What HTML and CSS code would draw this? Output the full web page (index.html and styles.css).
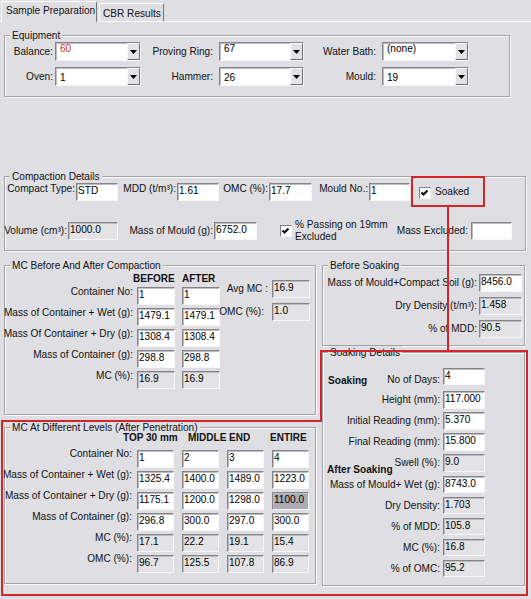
FILE: index.html
```html
<!DOCTYPE html>
<html>
<head>
<meta charset="utf-8">
<title>CBR Sample Preparation</title>
<link rel="stylesheet" href="styles.css">
</head>
<body>
<div class="tabs">
  <div class="tab active">Sample Preparation</div>
  <div class="tab inactive">CBR Results</div>
</div>
<div class="page">
  <fieldset class="grp equip">
    <legend>Equipment</legend>
    <div class="eqrow">
      <span class="lab eq1">Balance:</span>
      <div class="sel w86"><span class="v red">60</span><span class="btn"><svg width="7" height="4" viewBox="0 0 7 4"><path d="M0 0H7L3.5 4Z"/></svg></span></div>
      <span class="lab eq2">Proving Ring:</span>
      <div class="sel w85"><span class="v">67</span><span class="btn"><svg width="7" height="4" viewBox="0 0 7 4"><path d="M0 0H7L3.5 4Z"/></svg></span></div>
      <span class="lab eq2">Water Bath:</span>
      <div class="sel w87"><span class="v">(none)</span><span class="btn"><svg width="7" height="4" viewBox="0 0 7 4"><path d="M0 0H7L3.5 4Z"/></svg></span></div>
    </div>
    <div class="eqrow low">
      <span class="lab eq1">Oven:</span>
      <div class="sel w86"><span class="v">1</span><span class="btn"><svg width="7" height="4" viewBox="0 0 7 4"><path d="M0 0H7L3.5 4Z"/></svg></span></div>
      <span class="lab eq2">Hammer:</span>
      <div class="sel w85"><span class="v">26</span><span class="btn"><svg width="7" height="4" viewBox="0 0 7 4"><path d="M0 0H7L3.5 4Z"/></svg></span></div>
      <span class="lab eq2">Mould:</span>
      <div class="sel w87"><span class="v">19</span><span class="btn"><svg width="7" height="4" viewBox="0 0 7 4"><path d="M0 0H7L3.5 4Z"/></svg></span></div>
    </div>
  </fieldset>

  <fieldset class="grp comp">
    <legend>Compaction Details</legend>
    <div class="crow1">
      <span class="lab ca">Compact Type:</span><div class="in w42">STD</div>
      <span class="lab cb1">MDD (t/m³):</span><div class="in w42">1.61</div>
      <span class="lab cc">OMC (%):</span><div class="in w43">17.7</div>
      <span class="lab cd">Mould No.:</span><div class="in w41">1</div>
      <span class="chk soak"><svg width="10" height="10" viewBox="0 0 10 10"><polyline points="1.5,4.5 3.5,6.5 7.5,2.5"/></svg></span><span class="chkt">Soaked</span>
    </div>
    <div class="crow2">
      <span class="lab ce">Volume (cm³):</span><div class="in ro w50">1000.0</div>
      <span class="lab cf">Mass of Mould (g):</span><div class="in w43">6752.0</div>
      <span class="chk pass"><svg width="10" height="10" viewBox="0 0 10 10"><polyline points="1.5,4.5 3.5,6.5 7.5,2.5"/></svg></span><span class="twoline">% Passing on 19mm<br>Excluded</span>
      <span class="lab cg">Mass Excluded:</span><div class="in w41 mx"></div>
    </div>
  </fieldset>

  <div class="lower">
    <div class="colL">
      <fieldset class="grp mcb">
        <legend>MC Before And After Compaction</legend>
        <div class="mcb-body">
          <div class="mcb-main">
            <div class="hdr"><span class="sp128"></span><span class="h49">BEFORE</span><span>AFTER</span></div>
            <div class="rows">
              <div class="row"><span class="lab ml">Container No:</span><div class="in c38">1</div><div class="in c38 g7">1</div></div>
              <div class="row"><span class="lab ml">Mass of Container + Wet (g):</span><div class="in c38">1479.1</div><div class="in c38 g7">1479.1</div></div>
              <div class="row"><span class="lab ml">Mass Of Container + Dry (g):</span><div class="in c38">1308.4</div><div class="in c38 g7">1308.4</div></div>
              <div class="row"><span class="lab ml">Mass of Container (g):</span><div class="in c38">298.8</div><div class="in c38 g7">298.8</div></div>
              <div class="row"><span class="lab ml">MC (%):</span><div class="in ro c38">16.9</div><div class="in ro c38 g7">16.9</div></div>
            </div>
          </div>
          <div class="avg">
            <div class="row mid"><span class="lab al">Avg MC :</span><div class="in ro c38">16.9</div></div>
            <div class="row mid"><span class="lab al2">OMC (%):</span><div class="in ro c38">1.0</div></div>
          </div>
        </div>
      </fieldset>

      <fieldset class="grp mcd">
        <legend>MC At Different Levels (After Penetration)</legend>
        <div class="hdr hdr2"><span class="sp118"></span><span class="h65">TOP 30 mm</span><span class="h41">MIDDLE</span><span class="h41">END</span><span>ENTIRE</span></div>
        <div class="rows">
          <div class="row"><span class="lab ml2">Container No:</span><div class="in c37">1</div><div class="in c37 g8">2</div><div class="in c37 g8">3</div><div class="in c37 g8">4</div></div>
          <div class="row"><span class="lab ml2">Mass of Container + Wet (g):</span><div class="in c37">1325.4</div><div class="in c37 g8">1400.0</div><div class="in c37 g8">1489.0</div><div class="in c37 g8">1223.0</div></div>
          <div class="row"><span class="lab ml2">Mass of Container + Dry (g):</span><div class="in c37">1175.1</div><div class="in c37 g8">1200.0</div><div class="in c37 g8">1298.0</div><div class="in c37 g8 hl">1100.0</div></div>
          <div class="row"><span class="lab ml2">Mass of Container (g):</span><div class="in c37">296.8</div><div class="in c37 g8">300.0</div><div class="in c37 g8">297.0</div><div class="in c37 g8">300.0</div></div>
          <div class="row"><span class="lab ml2">MC (%):</span><div class="in ro c37">17.1</div><div class="in ro c37 g8">22.2</div><div class="in ro c37 g8">19.1</div><div class="in ro c37 g8">15.4</div></div>
          <div class="row"><span class="lab ml2">OMC (%):</span><div class="in ro c37">96.7</div><div class="in ro c37 g8">125.5</div><div class="in ro c37 g8">107.8</div><div class="in ro c37 g8">86.9</div></div>
        </div>
      </fieldset>
    </div>

    <div class="colR">
      <fieldset class="grp bs">
        <legend>Before Soaking</legend>
        <div class="bsrows">
          <div class="row mid"><span class="lab bl">Mass of Mould+Compact Soil (g):</span><div class="in w43">8456.0</div></div>
          <div class="row mid"><span class="lab bl">Dry Density (t/m³):</span><div class="in ro w43">1.458</div></div>
          <div class="row mid"><span class="lab bl">% of MDD:</span><div class="in ro w43">90.5</div></div>
        </div>
      </fieldset>

      <fieldset class="grp sd">
        <legend>Soaking Details</legend>
        <div class="sdrows">
          <div class="row first"><span class="lab sl split"><b class="sect">Soaking</b><span>No of Days:</span></span><div class="in w42">4</div></div>
          <div class="row mid"><span class="lab sl">Height (mm):</span><div class="in w42">117.000</div></div>
          <div class="row mid"><span class="lab sl">Initial Reading (mm):</span><div class="in w42">5.370</div></div>
          <div class="row mid"><span class="lab sl">Final Reading (mm):</span><div class="in w42">15.800</div></div>
          <div class="row mid"><span class="lab sl">Swell (%):</span><div class="in ro w42">9.0</div></div>
          <div class="after">After Soaking</div>
          <div class="row mid r17"><span class="lab sl">Mass of Mould+ Wet (g):</span><div class="in w42">8743.0</div></div>
          <div class="row mid r17"><span class="lab sl">Dry Density:</span><div class="in ro w42">1.703</div></div>
          <div class="row mid r17"><span class="lab sl">% of MDD:</span><div class="in ro w42">105.8</div></div>
          <div class="row mid r17"><span class="lab sl">MC (%):</span><div class="in ro w42">16.8</div></div>
          <div class="row mid r17"><span class="lab sl">% of OMC:</span><div class="in ro w42">95.2</div></div>
        </div>
      </fieldset>
    </div>
  </div>
</div>

<svg class="annot" width="531" height="599" viewBox="0 0 531 599">
  <g fill="none" stroke="#d3262b" stroke-width="2">
    <rect x="412" y="177" width="72" height="29"/>
    <line x1="448" y1="206" x2="448" y2="351"/>
    <path d="M321 351H527V595H2V421H321Z"/>
  </g>
</svg>
</body>
</html>
```

FILE: styles.css
```css
* { box-sizing: border-box; }
html, body { margin: 0; padding: 0; }
body {
  width: 531px;
  height: 599px;
  overflow: hidden;
  position: relative;
  background: #dfdfe3;
  font-family: "Liberation Sans", Arial, sans-serif;
  font-size: 10.1px;
  color: #111;
}
fieldset { margin: 0; padding: 0; min-width: 0; }

/* tabs */
.tabs {
  height: 22px;
  display: flex;
  align-items: flex-end;
  padding-left: 1px;
  border-bottom: 1px solid #fafafa;
}
.tab { white-space: nowrap; line-height: 14px; }
.tab.active {
  width: 96px;
  height: 21px;
  margin-bottom: -1px;
  background: #dfdfe3;
  border-top: 1px solid #fff;
  border-left: 1px solid #fff;
  border-right: 1px solid #77777b;
  border-radius: 2px 2px 0 0;
  padding: 2px 0 0 4px;
  position: relative;
  z-index: 1;
}
.tab.inactive {
  width: 65px;
  height: 18px;
  margin-left: 2px;
  border-top: 1px solid #fff;
  border-left: 1px solid #fff;
  border-right: 1px solid #77777b;
  border-radius: 2px 2px 0 0;
  padding: 3px 0 0 3px;
}

.page { padding: 7px 0 0 4px; }

/* group boxes */
.grp {
  border: 1px solid #a2a2a7;
  box-shadow: 1px 1px 0 #fbfbfb, inset 1px 1px 0 #fbfbfb;
}
legend {
  padding: 0 2px;
  margin-left: 5px;
  line-height: 13px;
  height: 13px;
  background: #dfdfe3;
  white-space: nowrap;
}
.equip { width: 506px; height: 68px; }
.comp { width: 522px; height: 81px; margin-top: 73px; }
.lower { display: flex; margin-top: 8px; }
.colL { width: 312px; }
.colR { width: 203px; margin-left: 6px; }
.mcb { height: 156px; }
.mcd { height: 163px; margin-top: 6px; }
.bs { height: 87px; }
.sd { height: 240px; }

/* labels */
.lab {
  display: flex;
  justify-content: flex-end;
  white-space: nowrap;
  line-height: 14px;
  flex: none;
}

/* inputs */
.in {
  flex: none;
  height: 18px;
  background: #fff;
  border: 1px solid;
  border-color: #858589 #f7f7f7 #f7f7f7 #858589;
  box-shadow: inset 1px 1px 0 #bcbcc0;
  padding: 0 0 0 1px;
  line-height: 13px;
  white-space: nowrap;
  overflow: hidden;
  color: #000;
}
.in.ro { background: #e3e3e6; }
.in.hl { background: #acacb3; }
.w41 { width: 41px; }
.w42 { width: 42px; }
.w43 { width: 43px; }
.w50 { width: 50px; }
.c38 { width: 38px; }
.c37 { width: 37px; }
.g7 { margin-left: 7px; }
.g8 { margin-left: 8px; }

/* combo boxes */
.sel {
  flex: none;
  display: flex;
  height: 19px;
  background: #fff;
  border: 1px solid;
  border-color: #858589 #f7f7f7 #f7f7f7 #858589;
  box-shadow: inset 1px 1px 0 #bcbcc0;
}
.w85 { width: 85px; }
.w86 { width: 86px; }
.w87 { width: 87px; }
.sel .v { flex: 1; padding-left: 4px; line-height: 12px; color: #000; }
.sel .v.red { color: #c8383a; }
.eqrow.low .sel .v { padding-top: 4px; }
.sel .btn {
  width: 13px;
  height: 17px;
  background: #e3e3e6;
  border: 1px solid;
  border-color: #fbfbfb #6e6e72 #6e6e72 #fbfbfb;
  display: flex;
  align-items: center;
  justify-content: center;
}
.sel .btn svg { display: block; fill: #000; }

/* equipment */
.eqrow { display: flex; align-items: center; height: 19px; }
.eqrow + .eqrow { margin-top: 6px; }
.eq1 { width: 50px; padding-right: 2px; }
.eq2 { width: 78px; padding-right: 6px; }

/* checkboxes */
.chk {
  flex: none;
  width: 12px;
  height: 12px;
  background: #fff;
  border: 1px solid;
  border-color: #808084 #f4f4f4 #f4f4f4 #808084;
  display: flex;
}
.chk svg { display: block; fill: none; stroke: #000; stroke-width: 2; }
.chkt { line-height: 14px; margin-left: 4px; margin-top: 2px; }

/* compaction */
.crow1 { display: flex; align-items: flex-start; height: 18px; }
.crow1 .lab { margin-top: -1px; padding-right: 1px; }
.ca { width: 71px; }
.cb1 { width: 59px; }
.cc { width: 50px; }
.cd { width: 57px; }
.chk.soak { margin-left: 9px; margin-top: 4px; }
.crow2 { display: flex; align-items: center; height: 24px; margin-top: 18px; }
.ce { width: 63px; padding-right: 1px; }
.cf { width: 96px; padding-right: 1px; }
.chk.pass { margin-left: 23px; }
.twoline { width: 100px; margin-left: 3px; line-height: 12px; white-space: nowrap; }
.cg { width: 75px; padding-right: 2px; }
.mx { margin-left: 1px; }

/* tables */
.rows > .row + .row { margin-top: 3px; }
.row { display: flex; align-items: flex-start; height: 18px; }
.row.mid { align-items: center; }
.hdr { display: flex; height: 15px; line-height: 14px; font-weight: bold; font-size: 10px; white-space: nowrap; }
.hdr2 { height: 19px; margin-top: -3px; }
.sp128 { width: 128px; }
.h49 { width: 49px; }
.sp118 { width: 118px; }
.h65 { width: 65px; }
.h41 { width: 41px; }
.ml { width: 132px; padding-right: 4px; margin-top: -2px; }
.ml2 { width: 132px; padding-right: 5px; margin-top: -3px; }

.mcb-body { display: flex; }
.mcb-main { width: 215px; }
.avg { margin-top: 8px; }
.avg .row + .row { margin-top: 5px; }
.al { width: 52px; padding-right: 4px; }
.al2 { width: 52px; padding-right: 8px; }

/* before soaking */
.bsrows { padding-top: 2px; }
.bsrows .row + .row { margin-top: 5px; }
.bl { width: 156px; padding-right: 2px; }

/* soaking details */
.sdrows { padding-top: 9px; }
.sl { width: 120px; padding-right: 3px; }
.sdrows .row.first { height: 17px; }
.sdrows .row.first .in { height: 17px; }
.split { justify-content: space-between; margin-top: 5px; }
.sect { font-weight: bold; margin-left: 5px; margin-top: 1px; }
.sdrows .row + .row { margin-top: 3px; }
.sdrows .row.first + .row { margin-top: 6px; }
.after {
  height: 14px;
  line-height: 14px;
  margin-top: -9px;
  padding-left: 4px;
  font-weight: bold;
  white-space: nowrap;
}
.sdrows .after + .row { margin-top: -1px; }
.sdrows .row.r17 { height: 17px; }
.sdrows .row.r17 .in { height: 17px; }
.sdrows .row.r17 + .row.r17 { margin-top: 4px; }

/* red annotation overlay */
.annot {
  position: absolute;
  left: 0;
  top: 0;
  pointer-events: none;
  z-index: 5;
}
```
